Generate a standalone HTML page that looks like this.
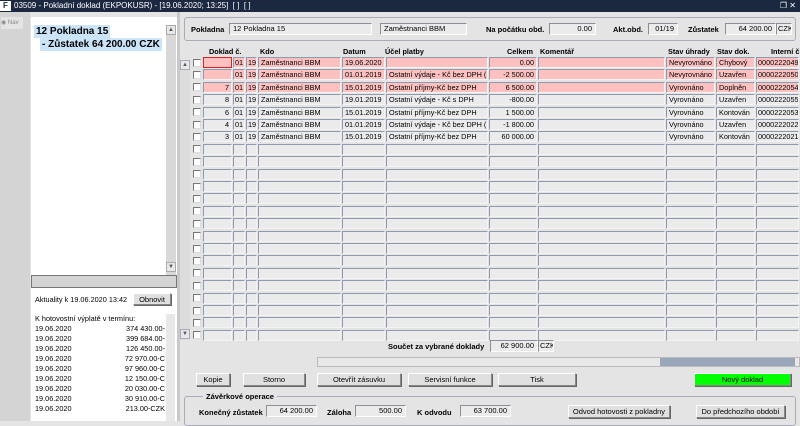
<!DOCTYPE html>
<html><head><meta charset="utf-8"><style>
*{box-sizing:border-box;margin:0;padding:0}
body{width:800px;height:421px;overflow:hidden;background:#e4e4e4;font-family:"Liberation Sans",sans-serif;font-size:7.5px;color:#000;position:relative}
.a{position:absolute}
.title{left:0;top:0;width:800px;height:12px;background:#1c2740;color:#fff;font-size:8px;line-height:12px;padding-left:14px;white-space:nowrap}
.fld{position:absolute;background:#ebebeb;border:1px solid #8a8f99;border-right-color:#fff;border-bottom-color:#fff;height:12px;line-height:10px;padding:0 3px;white-space:nowrap;overflow:hidden}
.c{position:absolute;height:11px;background:#ebebeb;border:1px solid #8d9ab0;border-right-color:#f4f4f4;border-bottom-color:#f4f4f4;line-height:9px;padding:0 2px;white-space:nowrap;overflow:hidden;font-size:7.3px}
.c.s{padding:0 1px}
.p{background:#ffc0c0}
.r{text-align:right}
.cb{position:absolute;width:8px;height:8px;background:#fff;border:1px solid #777;border-right-color:#ddd;border-bottom-color:#ddd}
.hd{position:absolute;top:47px;font-weight:bold;font-size:7.3px}
.btn{position:absolute;height:13px;background:#e0e0e0;border:1px solid #888;border-top-color:#fff;border-left-color:#fff;box-shadow:1px 1px 0 #666;text-align:center;line-height:11px;font-size:7.5px}
.b{font-weight:bold}
</style></head><body>
<div class="a title"><span style="position:absolute;left:0;top:1px;width:11px;height:10px;background:#fff;color:#1c2740;font-weight:bold;font-size:8px;line-height:10px;text-align:center">F</span>03509 - Pokladní doklad (EKPOKUSR) - [19.06.2020; 13:25] &nbsp;[ ] &nbsp;[ ]<span style="position:absolute;right:4px;top:0">&#x2750; ✕</span></div>
<div class="a" style="left:0;top:12px;width:30px;height:409px;background:#d4d4d4"></div>
<div class="a" style="left:1px;top:17px;width:22px;height:12px;background:#e4e4e4;color:#888;font-size:6px;line-height:12px">&#9673; Nav</div>
<div class="a" style="left:31px;top:17px;width:146px;height:258px;background:#fff"></div>
<div class="a" style="left:34px;top:25px;background:#cce4f7;font-size:10px;font-weight:bold;padding:0 2px;line-height:13px">12 Pokladna 15</div>
<div class="a" style="left:40px;top:38px;width:122px;background:#cce4f7;font-size:10px;font-weight:bold;padding:0 2px;line-height:13px">- Zůstatek 64 200.00 CZK</div>
<div class="a" style="left:166px;top:25px;width:10px;height:250px;background:#d8d8d8"></div>
<div class="a" style="left:166px;top:25px;width:10px;height:10px;background:#e8e8e8;border:1px solid #aaa;font-size:6px;text-align:center;line-height:8px;color:#556">▲</div>
<div class="a" style="left:166px;top:262px;width:10px;height:10px;background:#e8e8e8;border:1px solid #aaa;font-size:6px;text-align:center;line-height:8px;color:#556">▼</div>
<div class="a" style="left:31px;top:275px;width:146px;height:13px;background:#d4d4d4;border:1px solid #777"></div>
<div class="a" style="left:31px;top:288px;width:146px;height:133px;background:#fff"></div>
<div class="a" style="left:35px;top:295px;font-size:7.3px">Aktuality k 19.06.2020 13:42</div>
<div class="btn" style="left:133px;top:293px;width:38px;height:12px">Obnovit</div>
<div class="a" style="left:35px;top:314px;font-size:7.3px;line-height:10px;width:130px">K hotovostní výplatě v termínu:<br>
<div style="display:flex;justify-content:space-between">19.06.2020<span>374 430.00-</span></div>
<div style="display:flex;justify-content:space-between">19.06.2020<span>399 684.00-</span></div>
<div style="display:flex;justify-content:space-between">19.06.2020<span>126 450.00-</span></div>
<div style="display:flex;justify-content:space-between">19.06.2020<span>72 970.00-C</span></div>
<div style="display:flex;justify-content:space-between">19.06.2020<span>97 960.00-C</span></div>
<div style="display:flex;justify-content:space-between">19.06.2020<span>12 150.00-C</span></div>
<div style="display:flex;justify-content:space-between">19.06.2020<span>20 030.00-C</span></div>
<div style="display:flex;justify-content:space-between">19.06.2020<span>30 910.00-C</span></div>
<div style="display:flex;justify-content:space-between">19.06.2020<span>213.00-CZK</span></div></div>
<div class="a" style="left:166px;top:314px;width:9px;height:107px;background:#e8e8e8"></div>
<div class="a" style="left:177px;top:12px;width:3px;height:409px;background:#c8c8c8"></div>
<div class="a" style="left:184px;top:17px;width:612px;height:24px;border:1px solid #aab;border-radius:3px"></div>
<div class="a b" style="left:191px;top:25px">Pokladna</div>
<div class="fld" style="left:229px;top:23px;width:143px">12 Pokladna 15</div>
<div class="fld" style="left:380px;top:23px;width:87px">Zaměstnanci BBM</div>
<div class="a b" style="left:486px;top:25px">Na počátku obd.</div>
<div class="fld r" style="left:549px;top:23px;width:47px">0.00</div>
<div class="a b" style="left:613px;top:25px">Akt.obd.</div>
<div class="fld r" style="left:648px;top:23px;width:30px">01/19</div>
<div class="a b" style="left:688px;top:25px">Zůstatek</div>
<div class="fld r" style="left:725px;top:23px;width:51px">64 200.00</div>
<div class="fld" style="left:776px;top:23px;width:16px;padding:0 1px">CZK</div>
<div class="hd" style="left:209px">Doklad č.</div>
<div class="hd" style="left:260px">Kdo</div>
<div class="hd" style="left:343px">Datum</div>
<div class="hd" style="left:385px">Účel platby</div>
<div class="hd" style="left:507px">Celkem</div>
<div class="hd" style="left:540px">Komentář</div>
<div class="hd" style="left:668px">Stav úhrady</div>
<div class="hd" style="left:717px">Stav dok.</div>
<div class="hd" style="left:771px">Interní č</div>
<div class="a" style="left:180px;top:60px;width:10px;height:280px;background:#dcdcdc"></div>
<div class="a" style="left:180px;top:60px;width:10px;height:10px;background:#e8e8e8;border:1px solid #aab;font-size:6px;text-align:center;line-height:8px;color:#556">▲</div>
<div class="a" style="left:180px;top:329px;width:10px;height:10px;background:#e8e8e8;border:1px solid #aab;font-size:6px;text-align:center;line-height:8px;color:#556">▼</div>
<div id="rows"></div>
<script>
var cols=[[203,30],[233,13],[246,12],[258,84],[342,44],[386,103],[489,49],[538,128],[666,50],[716,40],[756,44]];
var data=[
["","01","19","Zaměstnanci BBM","19.06.2020","","0.00","","Nevyrovnáno","Chybový","0000222049",1],
["","01","19","Zaměstnanci BBM","01.01.2019","Ostatní výdaje - Kč bez DPH (","-2 500.00","","Nevyrovnáno","Uzavřen","0000222050",1],
["7","01","19","Zaměstnanci BBM","15.01.2019","Ostatní příjmy-Kč bez DPH","6 500.00","","Vyrovnáno","Doplněn","0000222054",1],
["8","01","19","Zaměstnanci BBM","19.01.2019","Ostatní výdaje - Kč s DPH","-800.00","","Vyrovnáno","Uzavřen","0000222055",0],
["6","01","19","Zaměstnanci BBM","15.01.2019","Ostatní příjmy-Kč bez DPH","1 500.00","","Vyrovnáno","Kontován","0000222053",0],
["4","01","19","Zaměstnanci BBM","01.01.2019","Ostatní výdaje - Kč bez DPH (","-1 800.00","","Vyrovnáno","Uzavřen","0000222022",0],
["3","01","19","Zaměstnanci BBM","15.01.2019","Ostatní příjmy-Kč bez DPH","60 000.00","","Vyrovnáno","Kontován","0000222021",0]];
var h="";
for(var i=0;i<23;i++){var y=57+i*12.4;var d=data[i]||["","","","","","","","","","","",0];
h+='<div class="cb" style="left:193px;top:'+(y+1.5)+'px"></div>';
for(var j=0;j<cols.length;j++){var cl="c"+(d[11]?" p":"")+((j==0||j==6)?" r":"")+((j==1||j==2||j==10)?" s":"");
var st="left:"+cols[j][0]+"px;top:"+y+"px;width:"+(cols[j][1]-1)+"px;";
if(i==0&&j==0)st+="border:1px solid #d22;";
h+='<div class="'+cl+'" style="'+st+'">'+d[j]+'</div>';}}
document.getElementById("rows").innerHTML=h;
</script>
<div class="a b" style="left:388px;top:342px">Součet za vybrané doklady</div>
<div class="fld r" style="left:490px;top:340px;width:48px">62 900.00</div>
<div class="fld" style="left:538px;top:340px;width:16px;padding:0 1px">CZK</div>
<div class="a" style="left:317px;top:357px;width:483px;height:10px;background:#e8e8e8;border:1px solid #bbb"></div>
<div class="a" style="left:660px;top:358px;width:135px;height:8px;background:#9aa7ba"></div>
<div class="btn" style="left:196px;top:373px;width:34px">Kopie</div>
<div class="btn" style="left:243px;top:373px;width:62px">Storno</div>
<div class="btn" style="left:317px;top:373px;width:84px">Otevřít zásuvku</div>
<div class="btn" style="left:408px;top:373px;width:84px">Servisní funkce</div>
<div class="btn" style="left:498px;top:373px;width:78px">Tisk</div>
<div class="btn" style="left:694px;top:373px;width:97px;background:#00ff00">Nový doklad</div>
<div class="a" style="left:184px;top:396px;width:612px;height:30px;border:1px solid #aab;border-radius:3px"></div>
<div class="a b" style="left:203px;top:392px;background:#e4e4e4;padding:0 3px">Závěrkové operace</div>
<div class="a b" style="left:199px;top:408px">Konečný zůstatek</div>
<div class="fld r" style="left:266px;top:405px;width:51px">64 200.00</div>
<div class="a b" style="left:327px;top:408px">Záloha</div>
<div class="fld r" style="left:355px;top:405px;width:51px">500.00</div>
<div class="a b" style="left:417px;top:408px">K odvodu</div>
<div class="fld r" style="left:460px;top:405px;width:51px">63 700.00</div>
<div class="btn" style="left:568px;top:405px;width:102px">Odvod hotovosti z pokladny</div>
<div class="btn" style="left:696px;top:405px;width:89px">Do předchozího období</div>
</body></html>
